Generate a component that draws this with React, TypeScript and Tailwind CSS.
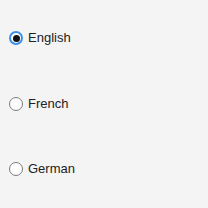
import React, { useState } from 'react';

const options = ['English', 'French', 'German'];

export default function App() {
  const [lang, setLang] = useState('English');
  return (
    <div
      className="w-[208px] h-[208px] bg-[#f4f4f4] flex flex-col pt-[29px] gap-[47.5px]"
      style={{ fontFamily: '"Liberation Sans", Arial, sans-serif' }}
    >
      {options.map((o) => {
        const on = lang === o;
        return (
          <label key={o} className="flex items-center h-[18px] text-[13px] text-[#222] cursor-pointer" onClick={() => setLang(o)}>
            <span
              className={
                on
                  ? 'ml-[9px] mr-[5px] w-[14px] h-[14px] rounded-full border-2 border-[#3b8fe6] bg-white flex items-center justify-center'
                  : 'ml-[9px] mr-[5px] w-[14px] h-[14px] rounded-full border border-[#7a7a7a] bg-white'
              }
            >
              {on && <span className="w-[7px] h-[7px] rounded-full bg-[#111]" />}
            </span>
            {o}
          </label>
        );
      })}
    </div>
  );
}
